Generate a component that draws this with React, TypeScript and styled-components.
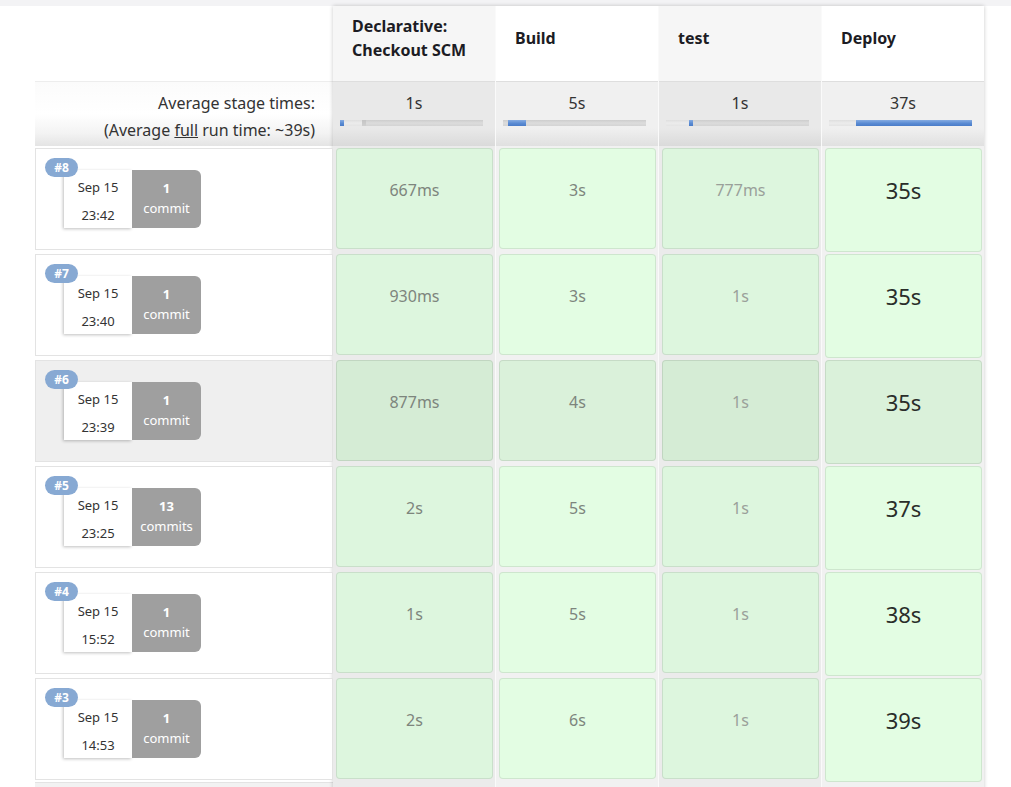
import React from "react";
import styled, { createGlobalStyle } from "styled-components";

const GlobalStyle = createGlobalStyle`
  html, body { margin: 0; padding: 0; background: #fff; overflow: hidden; }
  body { font-family: "Noto Sans", "Open Sans", sans-serif; color: #333; }
`;

type Tone = "mid" | "light" | "dark";
type SegKind = "base" | "light" | "tick" | "fill";

interface Stage {
  name: string;
  avg: string;
  tone: Tone;
  segs: { w: number; kind: SegKind }[];
}

const stages: Stage[] = [
  {
    name: "Declarative: Checkout SCM",
    avg: "1s",
    tone: "mid",
    segs: [
      { w: 4, kind: "fill" },
      { w: 18, kind: "light" },
      { w: 4, kind: "tick" },
    ],
  },
  {
    name: "Build",
    avg: "5s",
    tone: "mid",
    segs: [
      { w: 5, kind: "base" },
      { w: 18, kind: "fill" },
    ],
  },
  {
    name: "test",
    avg: "1s",
    tone: "light",
    segs: [
      { w: 23, kind: "light" },
      { w: 4, kind: "fill" },
    ],
  },
  {
    name: "Deploy",
    avg: "37s",
    tone: "dark",
    segs: [
      { w: 27, kind: "light" },
      { w: 116, kind: "fill" },
    ],
  },
];

interface Build {
  id: number;
  date: string;
  time: string;
  commits: number;
  durations: string[];
  hover?: boolean;
}

const builds: Build[] = [
  { id: 8, date: "Sep 15", time: "23:42", commits: 1, durations: ["667ms", "3s", "777ms", "35s"] },
  { id: 7, date: "Sep 15", time: "23:40", commits: 1, durations: ["930ms", "3s", "1s", "35s"] },
  { id: 6, date: "Sep 15", time: "23:39", commits: 1, durations: ["877ms", "4s", "1s", "35s"], hover: true },
  { id: 5, date: "Sep 15", time: "23:25", commits: 13, durations: ["2s", "5s", "1s", "37s"] },
  { id: 4, date: "Sep 15", time: "15:52", commits: 1, durations: ["1s", "5s", "1s", "38s"] },
  { id: 3, date: "Sep 15", time: "14:53", commits: 1, durations: ["2s", "6s", "1s", "39s"] },
];

const Page = styled.div`
  display: flex;
  flex-direction: column;
  width: 1011px;
`;

const TopStrip = styled.div`
  height: 6px;
  background: #f3f3f5;
`;

const Board = styled.div`
  display: flex;
  align-items: stretch;
  padding-left: 35px;
`;

const LeftPane = styled.div`
  width: 298px;
  display: flex;
  flex-direction: column;
`;

const HeadSpacer = styled.div`
  height: 75px;
`;

const AvgLabel = styled.div`
  height: 65px;
  box-sizing: border-box;
  padding: 8px 18px 0 0;
  text-align: right;
  font-size: 16px;
  line-height: 27px;
  color: #333;
  border-top: 1px solid #ededed;
  background: linear-gradient(to bottom, #fbfbfb 0%, #ffffff 50%, #f3f3f3 80%, #e4e4e4 100%);
`;

const Underlined = styled.span`
  text-decoration: underline;
`;

const BuildCell = styled.div<{ $hover?: boolean }>`
  position: relative;
  height: 102px;
  margin: 2px 0;
  box-sizing: border-box;
  border: 1px solid #e3e3e3;
  background: ${(p) => (p.$hover ? "#efefef" : "#fff")};
  padding: 21px 0 0 28px;
  display: flex;
  align-items: flex-start;
`;

const LeftTail = styled.div`
  flex: 1;
  min-height: 6px;
  border-top: 1px solid #e3e3e3;
  background: #f2f2f2;
`;

const Badge = styled.span`
  position: absolute;
  top: 9px;
  left: 9px;
  z-index: 1;
  height: 19px;
  min-width: 33px;
  box-sizing: border-box;
  padding: 0 6px;
  border-radius: 10px;
  background: #87a9d3;
  color: #fff;
  font-size: 12px;
  font-weight: 700;
  line-height: 19px;
  text-align: center;
`;

const DateBox = styled.div`
  width: 68px;
  height: 58px;
  box-sizing: border-box;
  padding-top: 3px;
  background: #fff;
  box-shadow: -1px 1px 3px rgba(0, 0, 0, 0.25);
  text-align: center;
  font-size: 13px;
  line-height: 28px;
  color: #333;
`;

const CommitBox = styled.div`
  width: 69px;
  height: 58px;
  box-sizing: border-box;
  padding-top: 8px;
  background: #9f9f9f;
  border-radius: 0 6px 6px 0;
  text-align: center;
  font-size: 13px;
  line-height: 20px;
  color: #fff;
`;

const CommitCount = styled.div`
  font-weight: 700;
`;

const StagePane = styled.div`
  display: flex;
  gap: 1px;
  background: #fafafa;
  box-shadow: 0 0 4px rgba(0, 0, 0, 0.22);
`;

const StageColumn = styled.div<{ $alt: boolean }>`
  width: 162px;
  display: flex;
  flex-direction: column;
  padding-bottom: 8px;
  background: ${(p) => (p.$alt ? "#ebebeb" : "#f1f1f1")};
`;

const StageHead = styled.div<{ $alt: boolean }>`
  height: 75px;
  box-sizing: border-box;
  padding: 0 10px 11px 19px;
  display: flex;
  align-items: center;
  background: ${(p) => (p.$alt ? "#f6f6f6" : "#fff")};
  font-weight: 700;
  font-size: 16px;
  line-height: 24px;
  color: #1c1c24;
`;

const AvgCell = styled.div<{ $alt: boolean }>`
  height: 65px;
  box-sizing: border-box;
  padding-top: 10px;
  border-top: 1px solid #dedede;
  background: ${(p) =>
    p.$alt
      ? "linear-gradient(to bottom, #e9e9e9 0%, #e9e9e9 72%, #dadada 100%)"
      : "linear-gradient(to bottom, #f0f0f0 0%, #f0f0f0 72%, #e0e0e0 100%)"};
`;

const AvgTime = styled.div`
  text-align: center;
  font-size: 16px;
  line-height: 22px;
  color: #333;
`;

const Track = styled.div`
  display: flex;
  margin: 6px 12px 0 7px;
  height: 6px;
  overflow: hidden;
  background: linear-gradient(to bottom, #cdcdcd, #dcdcdc 50%, #d4d4d4);
`;

const segBg: Record<SegKind, string> = {
  base: "transparent",
  light: "linear-gradient(to bottom, #dedede, #ececec 50%, #e4e4e4)",
  tick: "linear-gradient(to bottom, #c4c4c4, #d0d0d0)",
  fill: "linear-gradient(to bottom, #86ace2, #5a8bd3 55%, #4a7cc8)",
};

const Seg = styled.div<{ $kind: SegKind }>`
  flex: none;
  height: 100%;
  background: ${(p) => segBg[p.$kind]};
`;

const StageCell = styled.div`
  height: 106px;
  box-sizing: border-box;
  padding: 2px 2px 0 3px;
`;

const boxBg = (alt: boolean, hover?: boolean) => {
  if (alt) return hover ? "#d5ecd5" : "#ddf6de";
  return hover ? "#daf1da" : "#e3fde3";
};

const toneColor: Record<Tone, string> = {
  mid: "#7d857d",
  light: "#9aa09a",
  dark: "#2a2d2a",
};

const StageBox = styled.div<{ $alt: boolean; $hover?: boolean; $tone: Tone }>`
  height: ${(p) => (p.$tone === "dark" ? "104px" : "101px")};
  box-sizing: border-box;
  border: 1px solid rgba(0, 0, 0, 0.09);
  border-radius: 4px;
  background: ${(p) => boxBg(p.$alt, p.$hover)};
  padding-top: ${(p) => (p.$tone === "dark" ? "26px" : "30px")};
  text-align: center;
  font-size: ${(p) => (p.$tone === "dark" ? "22px" : "16px")};
  line-height: ${(p) => (p.$tone === "dark" ? "30px" : "22px")};
  color: ${(p) => toneColor[p.$tone]};
`;

export default function App() {
  return (
    <>
      <GlobalStyle />
      <Page>
        <TopStrip />
        <Board>
          <LeftPane>
            <HeadSpacer />
            <AvgLabel>
              Average stage times:
              <br />
              (Average <Underlined>full</Underlined> run time: ~39s)
            </AvgLabel>
            {builds.map((b) => (
              <BuildCell key={b.id} $hover={b.hover}>
                <Badge>#{b.id}</Badge>
                <DateBox>
                  <div>{b.date}</div>
                  <div>{b.time}</div>
                </DateBox>
                <CommitBox>
                  <CommitCount>{b.commits}</CommitCount>
                  <div>{b.commits === 1 ? "commit" : "commits"}</div>
                </CommitBox>
              </BuildCell>
            ))}
            <LeftTail />
          </LeftPane>
          <StagePane>
            {stages.map((s, i) => {
              const alt = i % 2 === 0;
              return (
                <StageColumn key={s.name} $alt={alt}>
                  <StageHead $alt={alt}>{s.name}</StageHead>
                  <AvgCell $alt={alt}>
                    <AvgTime>{s.avg}</AvgTime>
                    <Track>
                      {s.segs.map((seg, k) => (
                        <Seg key={k} $kind={seg.kind} style={{ width: seg.w }} />
                      ))}
                    </Track>
                  </AvgCell>
                  {builds.map((b) => (
                    <StageCell key={b.id}>
                      <StageBox $alt={alt} $hover={b.hover} $tone={s.tone}>
                        {b.durations[i]}
                      </StageBox>
                    </StageCell>
                  ))}
                </StageColumn>
              );
            })}
          </StagePane>
        </Board>
      </Page>
    </>
  );
}
